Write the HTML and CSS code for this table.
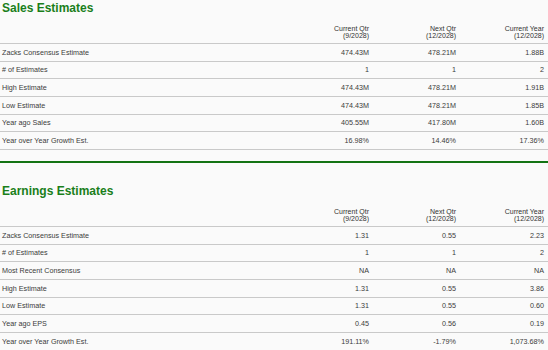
FILE: index.html
```html
<!DOCTYPE html>
<html>
<head>
<meta charset="utf-8">
<link rel="stylesheet" href="styles.css">
</head>
<body>
<section class="block">
  <h2 class="title">Sales Estimates</h2>
  <div class="grid">
    <div class="row head">
      <div class="lbl"></div>
      <div class="num"><div>Current Qtr</div><div>(9/2028)</div></div>
      <div class="num"><div>Next Qtr</div><div>(12/2028)</div></div>
      <div class="num"><div>Current Year</div><div>(12/2028)</div></div>
    </div>
    <div class="row"><div class="lbl">Zacks Consensus Estimate</div><div class="num">474.43M</div><div class="num">478.21M</div><div class="num">1.88B</div></div>
    <div class="row"><div class="lbl"># of Estimates</div><div class="num">1</div><div class="num">1</div><div class="num">2</div></div>
    <div class="row"><div class="lbl">High Estimate</div><div class="num">474.43M</div><div class="num">478.21M</div><div class="num">1.91B</div></div>
    <div class="row"><div class="lbl">Low Estimate</div><div class="num">474.43M</div><div class="num">478.21M</div><div class="num">1.85B</div></div>
    <div class="row"><div class="lbl">Year ago Sales</div><div class="num">405.55M</div><div class="num">417.80M</div><div class="num">1.60B</div></div>
    <div class="row"><div class="lbl">Year over Year Growth Est.</div><div class="num">16.98%</div><div class="num">14.46%</div><div class="num">17.36%</div></div>
  </div>
</section>
<hr class="divider">
<section class="block second">
  <h2 class="title">Earnings Estimates</h2>
  <div class="grid">
    <div class="row head">
      <div class="lbl"></div>
      <div class="num"><div>Current Qtr</div><div>(9/2028)</div></div>
      <div class="num"><div>Next Qtr</div><div>(12/2028)</div></div>
      <div class="num"><div>Current Year</div><div>(12/2028)</div></div>
    </div>
    <div class="row"><div class="lbl">Zacks Consensus Estimate</div><div class="num">1.31</div><div class="num">0.55</div><div class="num">2.23</div></div>
    <div class="row"><div class="lbl"># of Estimates</div><div class="num">1</div><div class="num">1</div><div class="num">2</div></div>
    <div class="row"><div class="lbl">Most Recent Consensus</div><div class="num">NA</div><div class="num">NA</div><div class="num">NA</div></div>
    <div class="row"><div class="lbl">High Estimate</div><div class="num">1.31</div><div class="num">0.55</div><div class="num">3.86</div></div>
    <div class="row"><div class="lbl">Low Estimate</div><div class="num">1.31</div><div class="num">0.55</div><div class="num">0.60</div></div>
    <div class="row"><div class="lbl">Year ago EPS</div><div class="num">0.45</div><div class="num">0.56</div><div class="num">0.19</div></div>
    <div class="row"><div class="lbl">Year over Year Growth Est.</div><div class="num">191.11%</div><div class="num">-1.79%</div><div class="num">1,073.68%</div></div>
  </div>
</section>
</body>
</html>
```

FILE: styles.css
```css
html, body {
  margin: 0;
  padding: 0;
  background: #fafafa;
}
body {
  font-family: "Liberation Sans", Arial, sans-serif;
  color: #3a3a3a;
  width: 548px;
  overflow: hidden;
}
.title {
  margin: 0;
  padding-left: 2px;
  font-size: 12px;
  line-height: 16px;
  height: 16px;
  font-weight: bold;
  color: #1a7f1a;
}
.grid {
  display: flex;
  flex-direction: column;
}
.row {
  display: grid;
  grid-template-columns: 286px 87px 87px 88px;
  align-items: center;
  height: 17.67px;
  box-sizing: border-box;
  border-bottom: 1px solid #c9c9c9;
  font-size: 7.2px;
  line-height: 9px;
}
.row.head {
  height: 28px;
  align-items: end;
  padding-bottom: 4px;
  font-size: 7px;
  line-height: 7px;
  color: #333;
}
.lbl {
  padding-left: 2px;
  white-space: nowrap;
}
.num {
  text-align: right;
  padding-right: 4px;
  white-space: nowrap;
}
.divider {
  margin: 11px 0 0 0;
  border: 0;
  height: 2px;
  background: #137313;
}
.second {
  margin-top: 20px;
}
```
